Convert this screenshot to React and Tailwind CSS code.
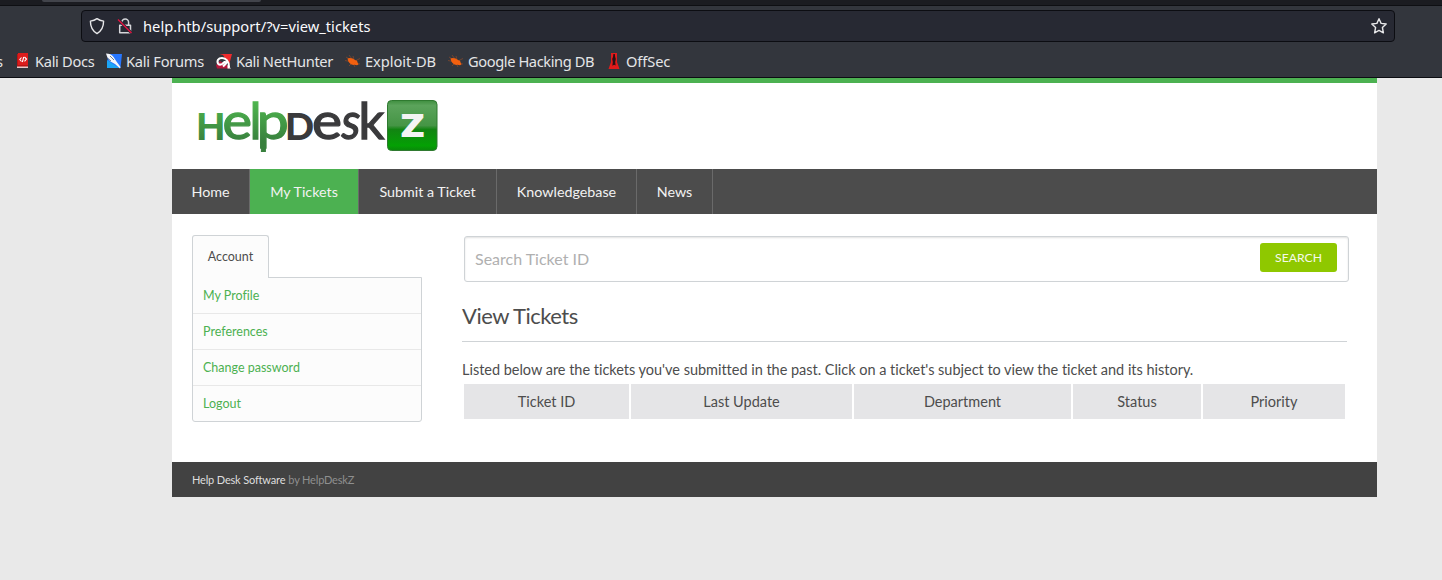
function DocsIcon() {
  return (
    <svg className="h-4 w-4" viewBox="0 0 16 16">
      <path d="M2 1h11v14H2z" fill="#b81414" />
      <path d="M3 0h10v12H3z" fill="#dc1c1c" />
      <path d="M2 13.500h11V15H2z" fill="#e8c9c9" />
      <path d="M6.500 4.500 4.800 6.500l1.700 2M9.500 4l2 2-2 2.300M8.700 4 7.400 9" stroke="#fff" strokeWidth="1.100" fill="none" />
    </svg>
  );
}

function ForumsIcon() {
  return (
    <svg className="h-4 w-4" viewBox="0 0 16 16">
      <path d="M2 1h14l-1.500 14H1z" fill="#2777ff" />
      <path d="M1 7v8h12z" fill="#1ba5f5" />
      <path d="M0 .5c3 0 6 1 7.500 3.500l3 4.500 4 5.500-.5 1.500-5-4.500-4.500-2.500C2.500 7 1 4 0 .5z" fill="#f4f6fa" />
      <path d="M4 3 8 7M2 5.500l3 2.500" stroke="#34495e" strokeWidth=".7" />
    </svg>
  );
}

function NetHunterIcon() {
  return (
    <svg className="h-4 w-4" viewBox="0 0 16 16">
      <path d="M3.500 1H16l-3 11L7 2z" fill="#ef2b2d" />
      <path d="M0 12 4 8l10 6-1 1.500H1z" fill="#b5173a" />
      <path d="M13 14c0-5.500-3-9-7-9S.8 8 2 10.500c.8 1.500 3 1.500 4.500.3L8.500 9c1.500-.3 2 1 1 2L7 13.500" stroke="#fff" strokeWidth="2.100" fill="none" />
      <path d="M11.500 12 15 15.500h-3.500z" fill="#fff" />
    </svg>
  );
}

function BugIcon() {
  return (
    <svg className="h-4 w-4" viewBox="0 0 16 16">
      <path d="M1 4l5 3M0 7.500l5 1M4 2l3 4M8 3l1 4M15 5.500l-4 2M15 11l-5-1M4 13l3-3M10 14l-1-2" stroke="#8b4a2b" strokeWidth=".7" />
      <path d="M2.500 5.500C4.500 4.300 8 5 10 7l2 .7.500 1.500 1 2.300-1.500.7-2.500-.4C6.500 12.300 3.500 10.500 2.500 5.500z" fill="#f2600f" />
    </svg>
  );
}

function OffSecIcon() {
  return (
    <svg className="h-4 w-4" viewBox="0 0 16 16">
      <path d="M5 0h6v9l2.500 7h-11L5 9z" fill="#e01b1b" />
      <path d="M7.400 1h1.400l.4 3 .6 2-.6 3 .4 3.500-1.500-.8-1.700 1L6.800 9l-.6-3 .8-2z" fill="#2a1014" />
    </svg>
  );
}

const bookmarks = [
  { label: 'Kali Docs', Icon: DocsIcon, box: 'w-[91px] tracking-[-0.32px]' },
  { label: 'Kali Forums', Icon: ForumsIcon, box: 'w-[110px] tracking-[-0.27px]' },
  { label: 'Kali NetHunter', Icon: NetHunterIcon, box: 'w-[129px] tracking-[-0.36px]' },
  { label: 'Exploit-DB', Icon: BugIcon, box: 'w-[103px] tracking-[-0.05px]' },
  { label: 'Google Hacking DB', Icon: BugIcon, box: 'w-[158px] tracking-[-0.41px]' },
  { label: 'OffSec', Icon: OffSecIcon, box: 'w-[70px] tracking-[-0.1px]' },
];

function Browser() {
  return (
    <div className='h-[78px] border-b border-[#0c0d12] bg-[#33363d] font-["Noto_Sans",sans-serif]'>
      <div className="h-[6px] border-b border-[#0e0f13] bg-[#1b1c21]">
        <div className="ml-[42px] h-[2px] w-[219px] rounded-b bg-[#42444b]" />
      </div>
      <div className="mt-[4px] ml-[81px] flex h-[32px] w-[1314px] items-center rounded-[4px] border border-[#0c0d12] bg-[#272933] pr-[6px] pl-[6px]">
        <svg className="h-[18px] w-[18px] shrink-0" viewBox="0 0 18 18" fill="none" stroke="#e8e8ea" strokeWidth="1.400">
          <path d="M9 1.600c2 1.500 4.200 2.200 6.600 2.500 0 6-1.800 9.900-6.600 12.500C4.200 14 2.400 10.100 2.400 4.100 4.800 3.800 7 3.100 9 1.600z" strokeLinejoin="round" />
        </svg>
        <svg className="ml-[10px] h-[18px] w-[18px] shrink-0" viewBox="0 0 18 18" fill="none">
          <path d="M5.800 8V5.500a3.400 3.400 0 0 1 6.800 0V8M3.700 8.300h10.800v7.500H3.700z" stroke="#d6d6da" strokeWidth="1.500" strokeLinejoin="round" />
          <path d="M2 2.500 15.500 16" stroke="#272933" strokeWidth="3" />
          <path d="M2 2.500 15.500 16" stroke="#e2113f" strokeWidth="1.400" />
        </svg>
        <span className="ml-[9px] text-[14.67px] tracking-[0.03px] whitespace-nowrap text-[#fbfbfe]">help.htb/support/?v=view_tickets</span>
        <svg className="ml-auto h-[18px] w-[18px]" viewBox="0 0 18 18" fill="none" stroke="#e8e8ea" strokeWidth="1.400" strokeLinejoin="round">
          <path d="m9 1.700 2.100 4.700 5.100.6-3.800 3.500 1 5.300L9 13.400l-4.400 2.400 1-5.300L1.800 7l5.100-.6z" />
        </svg>
      </div>
      <div className="flex h-[35px] items-center overflow-hidden pt-[3px] text-[14.67px] whitespace-nowrap text-[#e4e5e7]">
        <span className="flex w-[15px] shrink-0 justify-start">
          <span className="-ml-[4px]">s</span>
        </span>
        {bookmarks.map(({ label, Icon, box }) => (
          <div key={label} className={`flex shrink-0 items-center gap-[4px] ${box}`}>
            <Icon />
            <span className="-mt-px">{label}</span>
          </div>
        ))}
      </div>
    </div>
  );
}

function Logo() {
  return (
    <svg className="h-[60px] w-[244px] overflow-visible" viewBox="196 96 244 60" role="img" aria-label="HelpDeskZ">
      <defs>
        <linearGradient id="green" gradientUnits="userSpaceOnUse" x1="0" y1="100" x2="0" y2="142">
          <stop offset="0" stopColor="#4fb84f" />
          <stop offset="1" stopColor="#38803d" />
        </linearGradient>
        <linearGradient id="tile" x1="0" y1="0" x2="0" y2="1">
          <stop offset="0" stopColor="#3f8f40" />
          <stop offset=".1" stopColor="#5ba35b" />
          <stop offset=".5" stopColor="#459545" />
          <stop offset=".58" stopColor="#128412" />
          <stop offset=".9" stopColor="#04a004" />
          <stop offset="1" stopColor="#0a880a" />
        </linearGradient>
      </defs>
      <g fontFamily="Lato, sans-serif" fill="url(#green)" stroke="url(#green)" strokeWidth="1.300">
        <text x="196.500" y="138.500" fontSize="35.500" strokeWidth="2" textLength="28.500" lengthAdjust="spacingAndGlyphs">H</text>
        <text x="222.500" y="138.500" fontSize="51" textLength="29.500" lengthAdjust="spacingAndGlyphs">e</text>
        <text x="249.500" y="138.500" fontSize="51">l</text>
        <text x="256.800" y="138.500" fontSize="51" textLength="32" lengthAdjust="spacingAndGlyphs">p</text>
        <rect x="261.400" y="142" width="4" height="9.500" strokeWidth="1" />
      </g>
      <g fontFamily="Lato, sans-serif" fill="#3a3a3c" stroke="#3a3a3c" strokeWidth="1.300">
        <text x="285.500" y="138.500" fontSize="35.500" strokeWidth="2" textLength="28" lengthAdjust="spacingAndGlyphs">D</text>
        <text x="312" y="138.500" fontSize="51" textLength="30" lengthAdjust="spacingAndGlyphs">e</text>
        <text x="341.500" y="138.500" fontSize="51" fontStyle="italic" textLength="19" lengthAdjust="spacingAndGlyphs">s</text>
        <text x="358.500" y="138.500" fontSize="51">k</text>
      </g>
      <rect x="387.500" y="100.500" width="49.500" height="50" rx="4" fill="url(#tile)" stroke="#2f7a30" />
      <text x="400.500" y="137" fontFamily="Open Sans, sans-serif" fontWeight="800" fontSize="31" fill="#f4f4f4" textLength="24" lengthAdjust="spacingAndGlyphs">Z</text>
    </svg>
  );
}

const nav = [
  { label: 'Home', box: 'w-[78px]' },
  { label: 'My Tickets', box: 'w-[109px] bg-[#4cb151]' },
  { label: 'Submit a Ticket', box: 'w-[138px]' },
  { label: 'Knowledgebase', box: 'w-[140px]' },
  { label: 'News', box: 'w-[76px]' },
];

const columns = [
  { label: 'Ticket ID', box: 'w-[165px]' },
  { label: 'Last Update', box: 'w-[221px]' },
  { label: 'Department', box: 'w-[217px]' },
  { label: 'Status', box: 'w-[128px]' },
  { label: 'Priority', box: 'w-[142px]' },
];

const links = ['My Profile', 'Preferences', 'Change password', 'Logout'];

function Sidebar() {
  return (
    <aside className="w-[230px] text-[12.5px]">
      <div className="relative z-10 -mb-px flex h-[43px] w-[77px] items-center justify-center rounded-t-[3px] border border-b-0 border-[#cfd3d6] bg-[#fcfcfc] text-[#4d4d4d]">
        Account
      </div>
      <ul className="rounded-b-[3px] border border-[#cfd3d6] bg-[#fcfcfc] text-[#4cb151]">
        {links.map((l) => (
          <li key={l} className="flex h-[36px] items-center border-b border-[#e8e8e8] pt-[2px] pl-[10px] last:h-[35px] last:border-0">
            {l}
          </li>
        ))}
      </ul>
    </aside>
  );
}

export default function App() {
  return (
    <div className="h-[580px] w-[1442px] overflow-hidden bg-[#e9e9e9]">
      <Browser />
      <div className='ml-[172px] w-[1205px] border-t-[5px] border-[#4cb151] bg-white font-["Lato",sans-serif] text-[#4d4d4d] [font-variant-ligatures:none]'>
        <header className="h-[86px] pt-[13px] pl-[24px]">
          <Logo />
        </header>
        <nav className="flex h-[45px] bg-[#4c4c4c] text-[14.3px] text-[#f2f2f2]">
          {nav.map(({ label, box }) => (
            <div key={label} className={`flex items-center justify-center border-r border-[#6a6a6a] whitespace-nowrap ${box}`}>
              {label}
            </div>
          ))}
        </nav>
        <div className="flex h-[248px] pt-[21px] pl-[20px]">
          <Sidebar />
          <main className="ml-[40px] w-[887px]">
            <div className="mt-px ml-[2px] flex h-[46px] items-start justify-between rounded-[3px] border border-[#cfd3d6] bg-white pt-[6px] pr-[11px] pl-[10px] shadow-[inset_0_1px_2px_rgba(0,0,0,0.12)]">
              <span className="mt-[4px] text-[16px] leading-[24px] text-[#b0b0b0]">Search Ticket ID</span>
              <div className="flex h-[29px] w-[77px] items-center justify-center rounded-[3px] bg-[#8fc800] pt-[2px] text-[12.2px] text-[#f5faea]">SEARCH</div>
            </div>
            <h1 className="mt-[18px] h-[42px] w-[885px] border-b border-[#cfd3d6] text-[22px] leading-[32px] tracking-[-0.5px]">View Tickets</h1>
            <p className="mt-[18px] h-[24px] text-[14.5px] leading-[20px] tracking-[-0.02px] whitespace-nowrap">
              Listed below are the tickets you've submitted in the past. Click on a ticket's subject to view the ticket and its history.
            </p>
            <div className="ml-[2px] flex h-[35px] gap-[2px] text-[14.5px]">
              {columns.map(({ label, box }) => (
                <div key={label} className={`flex items-center justify-center bg-[#e5e5e7] ${box}`}>
                  {label}
                </div>
              ))}
            </div>
          </main>
        </div>
        <footer className="flex h-[35px] items-center bg-[#424242] pt-[2px] pl-[20px] text-[11px] tracking-[-0.17px] text-[#8f8f8f]">
          <span className="mr-[3px] text-[#dedede]">Help Desk Software</span>by HelpDeskZ
        </footer>
      </div>
    </div>
  );
}
